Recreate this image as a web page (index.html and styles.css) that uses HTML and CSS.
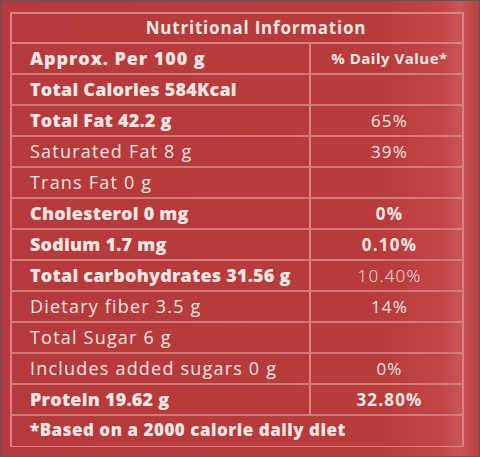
FILE: index.html
```html
<!DOCTYPE html>
<html lang="en">
<head>
    <meta charset="UTF-8">
    <title>Nutritional Information</title>
    <link rel="stylesheet" href="styles.css">
</head>
<body>
    <div class="frame">
        <div class="label">
            <div class="title">Nutritional Information</div>
            <div class="row head">
                <div class="name bold">Approx. Per 100 g</div>
                <div class="value dv">% Daily Value*</div>
            </div>
            <div class="row">
                <div class="name bold">Total Calories 584Kcal</div>
                <div class="value"></div>
            </div>
            <div class="row">
                <div class="name bold">Total Fat 42.2 g</div>
                <div class="value">65%</div>
            </div>
            <div class="row">
                <div class="name">Saturated Fat 8 g</div>
                <div class="value">39%</div>
            </div>
            <div class="row">
                <div class="name">Trans Fat 0 g</div>
                <div class="value"></div>
            </div>
            <div class="row">
                <div class="name bold">Cholesterol 0 mg</div>
                <div class="value bold">0%</div>
            </div>
            <div class="row">
                <div class="name bold">Sodium 1.7 mg</div>
                <div class="value bold">0.10%</div>
            </div>
            <div class="row">
                <div class="name bold">Total carbohydrates 31.56 g</div>
                <div class="value light">10.40%</div>
            </div>
            <div class="row">
                <div class="name">Dietary fiber 3.5 g</div>
                <div class="value">14%</div>
            </div>
            <div class="row">
                <div class="name">Total Sugar 6 g</div>
                <div class="value"></div>
            </div>
            <div class="row">
                <div class="name">Includes added sugars 0 g</div>
                <div class="value">0%</div>
            </div>
            <div class="row">
                <div class="name bold">Protein 19.62 g</div>
                <div class="value bold">32.80%</div>
            </div>
            <div class="footnote">*Based on a 2000 calorie daily diet</div>
        </div>
    </div>
</body>
</html>
```

FILE: styles.css
```css
* {
    margin: 0;
    padding: 0;
    box-sizing: border-box;
}

body {
    font-family: "Open Sans", "Liberation Sans", sans-serif;
    background: #5a5a5a;
    width: 480px;
    height: 457px;
    overflow: hidden;
}

.frame {
    width: 478px;
    height: 455px;
    margin: 1px 0 0 1px;
    padding: 11px 0 0 9px;
    background: linear-gradient(90deg, #b63a3b 0%, #b83c3c 80%, #c24646 92%, #c95454 96%, #bb4040 100%);
    color: #f5e6e2;
}

.label {
    width: 454px;
    border: 2px solid #d8837f;
    border-bottom-width: 1px;
}

.title {
    height: 30px;
    line-height: 28px;
    text-align: center;
    font-weight: 700;
    font-size: 17px;
    letter-spacing: 0.8px;
    padding-left: 38px;
    border-bottom: 2px solid #d8837f;
}

.row {
    display: grid;
    grid-template-columns: 297px 1fr;
    height: 31px;
    border-bottom: 2px solid #d27a76;
}

.name {
    padding-left: 18px;
    font-size: 18px;
    letter-spacing: 1.2px;
    line-height: 29px;
    white-space: nowrap;
}

.value {
    border-left: 2px solid #d8837f;
    text-align: center;
    font-size: 17px;
    letter-spacing: 1.2px;
    line-height: 29px;
    padding-left: 6px;
}

.name.bold {
    font-weight: 800;
    letter-spacing: 0.2px;
}

.head .name.bold {
    letter-spacing: 0.9px;
}

.bold {
    font-weight: 700;
}

.light {
    font-weight: 300;
}

.dv {
    font-weight: 700;
    font-size: 15px;
    letter-spacing: 0.5px;
}

.footnote {
    height: 30px;
    line-height: 28px;
    padding-left: 18px;
    font-weight: 800;
    font-size: 17px;
    letter-spacing: 0.5px;
}
```
